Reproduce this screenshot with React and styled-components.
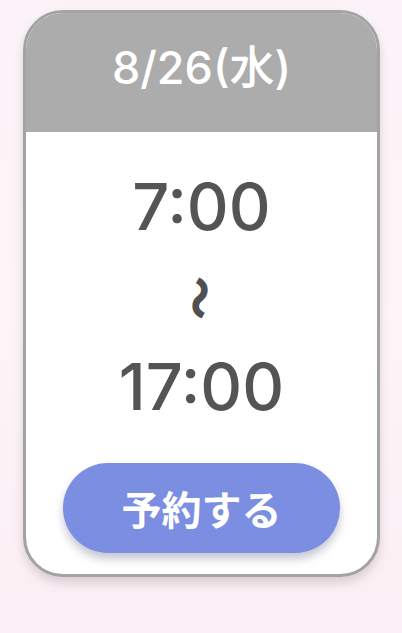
import styled, { createGlobalStyle } from "styled-components";

const GlobalStyle = createGlobalStyle`
  html, body {
    margin: 0;
    padding: 0;
  }
  body {
    background: linear-gradient(180deg, #fbf3f7 0%, #fdf5f8 50%, #fbeef4 100%);
    font-family: Inter, "Noto Sans CJK JP", sans-serif;
    width: 402px;
    height: 633px;
    overflow: hidden;
  }
`;

const Page = styled.div`
  padding: 10px 22px 0 23px;
`;

const Card = styled.div`
  width: 357px;
  height: 567px;
  box-sizing: border-box;
  border: 3px solid #a3a3a3;
  border-radius: 40px;
  background: #ffffff;
  overflow: hidden;
  display: flex;
  flex-direction: column;
  box-shadow: 0 6px 10px rgba(120, 110, 115, 0.25);
`;

const Header = styled.div`
  height: 119px;
  flex-shrink: 0;
  background: #acacac;
  display: flex;
  align-items: center;
  justify-content: center;
  color: #ffffff;
  font-size: 45px;
  font-weight: 500;
  line-height: 1;
  padding-bottom: 10px;
  box-sizing: border-box;
`;

const Body = styled.div`
  flex: 1;
  display: flex;
  flex-direction: column;
  align-items: center;
  padding-top: 42px;
`;

const Time = styled.div`
  color: #545454;
  font-size: 65px;
  font-weight: 500;
  line-height: 65px;
`;

const Wave = styled.div`
  color: #505050;
  font-family: "Noto Sans CJK JP", sans-serif;
  font-size: 44px;
  font-weight: 900;
  line-height: 48px;
  margin: 35px 0 32px;
  transform: rotate(90deg);
`;

const Button = styled.button`
  margin-top: 44px;
  width: 277px;
  height: 90px;
  flex-shrink: 0;
  border: none;
  border-radius: 45px;
  background: #7b8ee1;
  color: #ffffff;
  font-family: "Noto Sans CJK JP", sans-serif;
  font-size: 40px;
  font-weight: 700;
  box-shadow: 0 6px 9px rgba(80, 80, 120, 0.32);
  cursor: pointer;
`;

export default function App() {
  return (
    <>
      <GlobalStyle />
      <Page>
        <Card>
          <Header>8/26(水)</Header>
          <Body>
            <Time>7:00</Time>
            <Wave>〜</Wave>
            <Time>17:00</Time>
            <Button>予約する</Button>
          </Body>
        </Card>
      </Page>
    </>
  );
}
